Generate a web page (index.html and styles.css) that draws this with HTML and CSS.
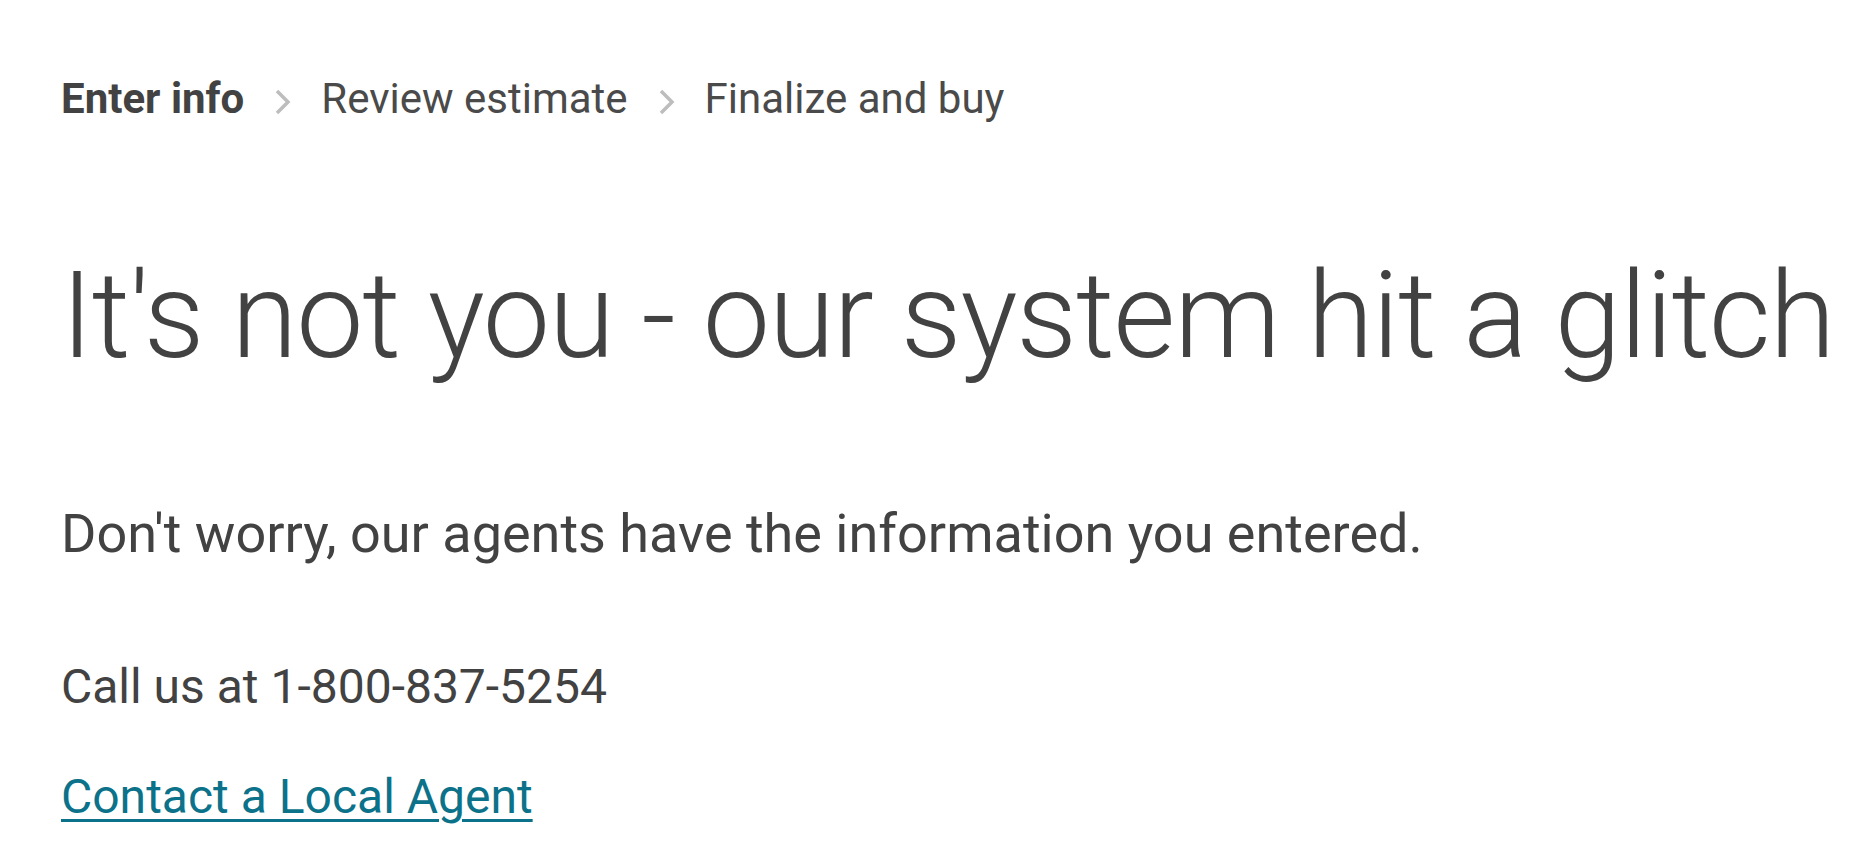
FILE: index.html
```html
<!DOCTYPE html>
<html lang="en">
<head>
    <meta charset="UTF-8">
    <meta name="viewport" content="width=device-width, initial-scale=1.0">
    <title>Something went wrong</title>
    <link rel="stylesheet" href="styles.css">
</head>
<body>
    <div class="container">
        <nav class="steps">
            <span class="step current">Enter info</span>
            <span class="chevron">
                <svg width="16" height="26" viewBox="0 0 16 26"><path d="M2 2 L13 13 L2 24" fill="none" stroke="#bdbdbd" stroke-width="3.5"/></svg>
            </span>
            <span class="step">Review estimate</span>
            <span class="chevron">
                <svg width="16" height="26" viewBox="0 0 16 26"><path d="M2 2 L13 13 L2 24" fill="none" stroke="#bdbdbd" stroke-width="3.5"/></svg>
            </span>
            <span class="step">Finalize and buy</span>
        </nav>

        <h1 class="title">It's not you - our system hit a glitch</h1>

        <p class="lead">Don't worry, our agents have the information you entered.</p>
        <p class="phone">Call us at 1-800-837-5254</p>
        <p class="agent"><a href="#" class="agent-link">Contact a Local Agent</a></p>
    </div>
</body>
</html>
```

FILE: styles.css
```css
body {
    font-family: Roboto, "Noto Sans", Arial, sans-serif;
    margin: 0;
    background-color: white;
    color: #424242;
}
.container {
    padding: 74px 0 0 61px;
}
.steps {
    display: flex;
    align-items: center;
    font-size: 42px;
    line-height: 49px;
    height: 49px;
}
.step {
    color: #4a4a4a;
}
.step.current {
    font-weight: bold;
    color: #424242;
}
.chevron {
    display: flex;
    align-items: center;
    margin: 6px 30px 0 31px;
}
.title {
    font-size: 120px;
    font-weight: 300;
    line-height: 144px;
    margin: 121px 0 0 0;
    white-space: nowrap;
    letter-spacing: -1.2px;
}
.lead {
    font-size: 54px;
    line-height: 76px;
    margin: 108px 0 0 0;
}
.phone {
    font-size: 48px;
    line-height: 66px;
    margin: 82px 0 0 0;
}
.agent {
    font-size: 48px;
    line-height: 66px;
    margin: 44px 0 0 0;
}
.agent-link {
    color: #0b728a;
    text-decoration: underline;
    text-decoration-thickness: 3px;
    text-underline-offset: 6px;
}
```
